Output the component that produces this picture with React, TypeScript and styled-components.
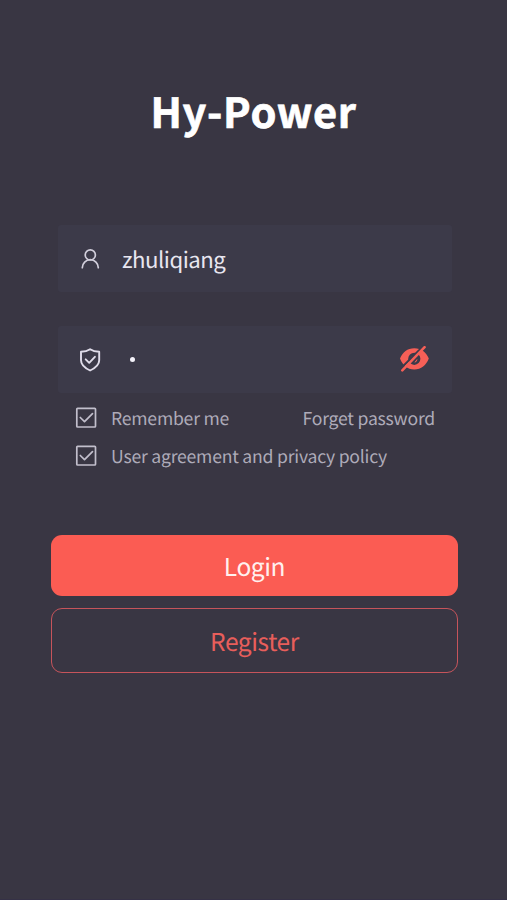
import React from "react";
import styled, { createGlobalStyle } from "styled-components";

const GlobalStyle = createGlobalStyle`
  * { box-sizing: border-box; }
  body { margin: 0; background: #393643; text-rendering: geometricPrecision; }
  button, input { font-family: inherit; text-rendering: inherit; }
`;

const Screen = styled.main`
  width: 100%;
  height: 900px;
  padding: 80px 49px 0 51px;
  background: #393643;
  border-bottom: 1px solid #353146;
  font-family: "Noto Sans CJK SC", "Noto Sans", sans-serif;
  overflow: hidden;
`;

const Title = styled.h1`
  margin: 0 2px 85px 0;
  height: 60px;
  line-height: 60px;
  font-size: 41.5px;
  font-weight: 700;
  letter-spacing: 0.7px;
  -webkit-text-stroke: 0.7px #fff;
  text-align: center;
  color: #fff;
`;

const Fields = styled.div`
  display: flex;
  flex-direction: column;
  gap: 34px;
  margin: 0 6px 0 7px;
`;

const Field = styled.label`
  display: flex;
  align-items: center;
  height: 67px;
  padding: 0 22px 0 20px;
  border-radius: 3px;
  background: #3c3a49;
`;

const FieldValue = styled.span`
  flex: 1;
  margin-left: 20px;
  height: 34px;
  line-height: 34px;
  font-size: 22.2px;
  letter-spacing: -0.5px;
  color: #e8e6f0;
`;

const PasswordDot = styled.span`
  width: 5px;
  height: 5px;
  margin: 0 auto 0 28px;
  border-radius: 50%;
  background: #f4f2fa;
`;

const Options = styled.div`
  display: flex;
  flex-direction: column;
  margin: 6px 23px 0 24px;
`;

const OptionRow = styled.div`
  display: flex;
  align-items: center;
  height: 38px;
  font-size: 17.6px;
  letter-spacing: -0.22px;
  line-height: 28px;
  white-space: nowrap;
  color: #aeabb9;
`;

const OptionText = styled.span`
  margin-left: 14px;
  padding-top: 2px;
`;

const ForgetLink = styled.span`
  margin-left: auto;
  padding-top: 2px;
`;

const Actions = styled.div`
  display: flex;
  flex-direction: column;
  gap: 12px;
  margin-top: 60px;
`;

const ActionButton = styled.button<{ $outlined?: boolean }>`
  height: ${(p) => (p.$outlined ? "65px" : "61px")};
  padding: 2px 0 0;
  border: ${(p) => (p.$outlined ? "1.5px solid #c6545b" : "none")};
  border-radius: 11px;
  background: ${(p) => (p.$outlined ? "transparent" : "#fb5c53")};
  color: ${(p) => (p.$outlined ? "#e85e5b" : "#fff0ee")};
  font-size: 24.5px;
  letter-spacing: -0.4px;
  line-height: 36px;
`;

const UserIcon = () => (
  <svg width="24" height="24" viewBox="0 0 24 24" fill="none" stroke="#d2cfdc" strokeWidth="1.7" strokeLinecap="round">
    <circle cx="12.3" cy="7.900" r="5.100" />
    <path d="M4.300 20.700a8 8 0 0 1 16 0" />
  </svg>
);

const ShieldIcon = () => (
  <svg width="24" height="24" viewBox="0 0 24 24" fill="none" stroke="#e0ddea" strokeWidth="1.9" strokeLinejoin="round" strokeLinecap="round">
    <path d="M12.1 1.200c2.600 1.800 5.600 2.500 9.100 2.600v8.500c0 4.500-3.400 7.600-9.100 10.200C6.400 19.900 3 16.800 3 12.300V3.800c3.500-.1 6.500-.8 9.100-2.600Z" />
    <path d="m7.700 11.300 3.500 3.500 5.700-6" />
  </svg>
);

const HiddenIcon = () => (
  <svg width="30" height="28" viewBox="0 0 30 28">
    <path
      fill="#f65f57"
      fillRule="evenodd"
      d="M14.300 2.300c7 0 11.800 3.700 14.500 10.300-2.700 6.900-7.500 10.900-14.500 10.900S2.700 19.500 0 12.600C2.700 6 7.300 2.300 14.300 2.300Zm0 4.400a6.100 6.100 0 1 0 0 12.200 6.100 6.100 0 0 0 0-12.200Z"
    />
    <path d="M14.300 16.500 17.300 12.700a3.200 3.200 0 0 1-3 3.800Z" fill="#f65f57" />
    <path d="M10.800 13.500a3.300 3.300 0 0 1 3.600-3.800Z" fill="#f65f57" />
    <path d="M0 23.200 23.500 0" stroke="#3c3a49" strokeWidth="2.200" />
    <path d="M2.300 24.400 24.600 1.200" stroke="#f65f57" strokeWidth="2.500" strokeLinecap="round" />
  </svg>
);

const CheckIcon = () => (
  <svg width="22" height="22" viewBox="0 0 22 22" fill="none" stroke="#c2bfcc" strokeLinejoin="round" strokeLinecap="round">
    <rect x="1.800" y="1.300" width="18.700" height="18.700" rx="0.800" strokeWidth="1.700" />
    <path d="m5.300 10.500 4.200 4.200 8-8" strokeWidth="1.700" />
  </svg>
);

export default function App() {
  return (
    <>
      <GlobalStyle />
      <Screen>
        <Title>Hy-Power</Title>
        <Fields>
          <Field>
            <UserIcon />
            <FieldValue>zhuliqiang</FieldValue>
          </Field>
          <Field>
            <ShieldIcon />
            <PasswordDot />
            <HiddenIcon />
          </Field>
        </Fields>
        <Options>
          <OptionRow>
            <CheckIcon />
            <OptionText>Remember me</OptionText>
            <ForgetLink>Forget password</ForgetLink>
          </OptionRow>
          <OptionRow>
            <CheckIcon />
            <OptionText>User agreement and privacy policy</OptionText>
          </OptionRow>
        </Options>
        <Actions>
          <ActionButton>Login</ActionButton>
          <ActionButton $outlined>Register</ActionButton>
        </Actions>
      </Screen>
    </>
  );
}
